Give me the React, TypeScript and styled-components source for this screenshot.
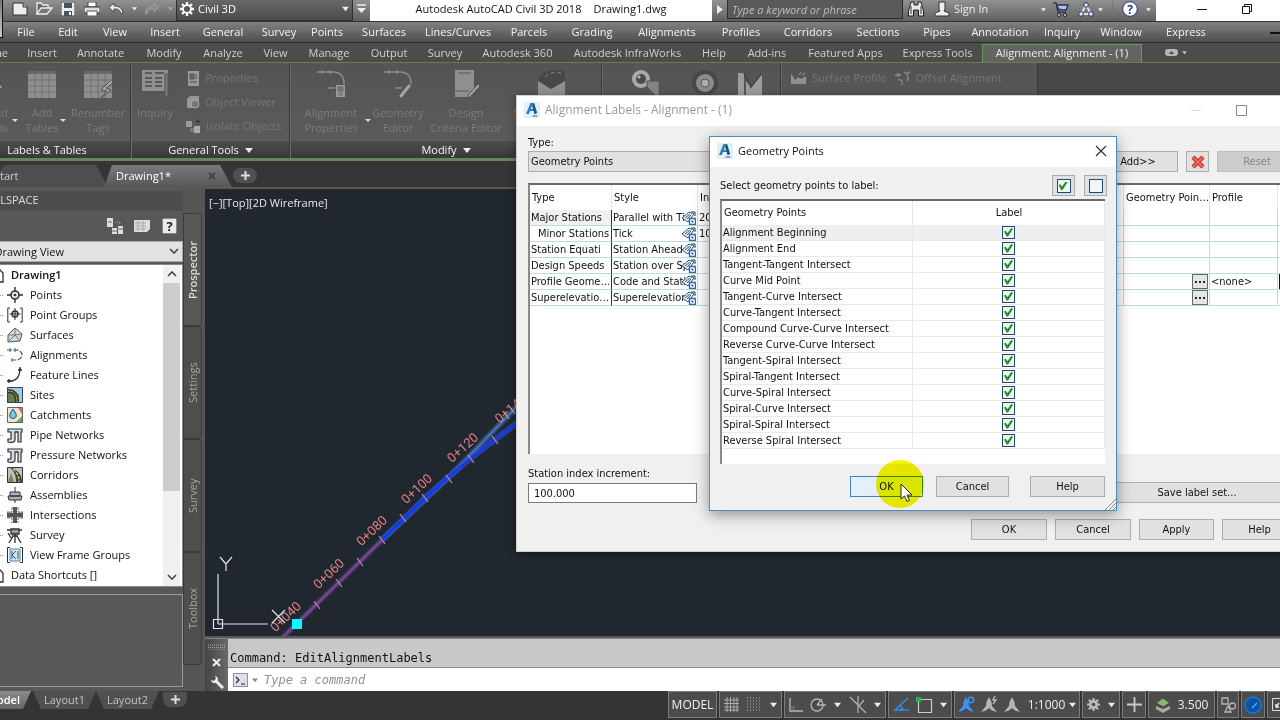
import React, { useState } from 'react';
import styled, { createGlobalStyle, css } from 'styled-components';

const ui = '"Open Sans", "Noto Sans", sans-serif';
const dialogFont = '"DejaVu Sans Condensed", "Open Sans", sans-serif';
const mono = '"DejaVu Sans Mono", "Liberation Mono", monospace';

const GlobalStyle = createGlobalStyle`
  *, *::before, *::after { box-sizing: border-box; }
  body { margin: 0; background: #333; font-family: ${ui}; font-size: 11px; line-height: 16px; color: #111; }
  button, input, select { font: inherit; color: inherit; margin: 0; padding: 0; border: 0; background: none; border-radius: 0; }
  h2 { margin: 0; font-size: 11px; font-weight: 400; }
  svg { display: block; flex: none; }
`;

const App_ = styled.div`
  position: relative;
  display: flex;
  flex-direction: column;
  min-height: 100vh;
  overflow: hidden;
`;

/* ---------- title bar ---------- */

const TitleBar = styled.header`
  display: flex;
  height: 22px;
  background: linear-gradient(#929292, #606060);
  border-bottom: 1px solid #333;
  color: #fff;
`;
const AppButton = styled.button`
  position: absolute;
  left: 0;
  top: 0;
  width: 3px;
  height: 38px;
  background: linear-gradient(#777, #ccc);
  border-right: 1px solid #111;
  border-bottom: 1px solid #111;
`;
const QuickAccess = styled.div`
  display: flex;
  align-items: center;
  padding: 0 0 4px 8px;
`;
const IconButton = styled.button<{ $w?: number }>`
  display: flex;
  align-items: center;
  justify-content: center;
  width: ${p => p.$w ?? 24}px;
  height: 18px;
`;
const Workspace = styled.button`
  display: flex;
  align-items: center;
  gap: 4px;
  width: 177px;
  padding: 0 3px 3px 3px;
  background: linear-gradient(#686868, #4c4c4c);
  border: 1px solid #2f2f2f;
  border-top: 0;
  span { flex: 1; text-align: left; }
`;
const WindowTitle = styled.div`
  flex: 1;
  display: flex;
  align-items: center;
  justify-content: center;
  gap: 12px;
  padding-bottom: 4px;
  background: #fff;
  color: #111;
  white-space: nowrap;
`;
const InfoCenter = styled.div`
  display: flex;
  align-items: center;
  padding-bottom: 3px;
  width: 444px;
`;
const Search = styled.input`
  flex: none;
  width: 176px;
  height: 20px;
  padding: 0 4px;
  background: #5a5a5a;
  border: 1px solid #2d2d2d;
  &::placeholder { color: #bdbdbd; font-style: italic; opacity: 1; }
`;
const SignIn = styled.button`
  display: flex;
  align-items: center;
  justify-content: space-between;
  width: 92px;
  color: #eee;
`;
const WindowControls = styled.div`
  display: flex;
  align-items: center;
  gap: 21px;
  width: 124px;
  padding: 0 0 4px 34px;
  background: #fff;
`;
const Rule = styled.i`
  width: 1px;
  height: 16px;
  background: #777;
`;

/* ---------- menus and ribbon ---------- */

const MenuBar = styled.nav`
  display: flex;
  height: 21px;
  padding-left: 8px;
  background: linear-gradient(#818181, #4e4e4e);
  border-bottom: 1px solid #2e2e2e;
  overflow: hidden;
`;
const MenuItem = styled.button<{ $w: number }>`
  flex: none;
  width: ${p => p.$w}px;
  padding-bottom: 1px;
  color: #f2f2f2;
  white-space: nowrap;
`;
const DocMinimise = styled.button`
  flex: none;
  margin-left: auto;
  width: 10px;
  height: 12px;
  border-bottom: 2px solid #111;
`;
const RibbonTabs = styled.nav`
  display: flex;
  height: 20px;
  background: #4c4c4c;
  border-bottom: 1px solid #5f8250;
  overflow: hidden;
`;
const RibbonTab = styled.button<{ $w: number; $active?: boolean; $cut?: boolean }>`
  flex: none;
  display: flex;
  justify-content: ${p => (p.$cut ? 'flex-end' : 'center')};
  align-items: center;
  width: ${p => p.$w}px;
  padding-right: ${p => (p.$cut ? 10 : 0)}px;
  color: #cfcfcf;
  white-space: nowrap;
  ${p => p.$active && css`
    color: #eee;
    margin-top: 1px;
    padding-bottom: 2px;
    background: #636363;
    border: 1px solid #6b9a58;
    border-bottom: 0;
  `}
`;
const RibbonToggle = styled.button`
  display: flex;
  align-items: center;
  gap: 4px;
  margin-left: 23px;
`;
const Pill = styled.i`
  display: flex;
  align-items: center;
  justify-content: center;
  width: 13px;
  height: 7px;
  border-radius: 3px;
  background: #b5b5b5;
`;
const Ribbon = styled.div`
  display: flex;
  height: 98px;
  background: #484848;
  border-bottom: 3px solid #67875a;
  overflow: hidden;
`;
const Panel = styled.section<{ $w: number }>`
  flex: none;
  display: flex;
  flex-direction: column;
  width: ${p => p.$w}px;
  background: linear-gradient(#545454, #5c5c5c);
  border-right: 1px solid #3a3a3a;
  & + & { border-left: 1px solid #60705a; }
`;
const PanelBody = styled.div`
  flex: 1;
  display: flex;
`;
const PanelTitle = styled.div<{ $shift?: number }>`
  display: flex;
  align-items: center;
  justify-content: center;
  gap: 6px;
  height: 17px;
  padding-right: ${p => p.$shift ?? 0}px;
  background: linear-gradient(#4d4d4d, #383838);
  color: #f2f2f2;
`;
const Big = styled.button<{ $w: number; $cut?: boolean }>`
  position: relative;
  flex: none;
  display: flex;
  flex-direction: column;
  align-items: ${p => (p.$cut ? 'flex-end' : 'center')};
  width: ${p => p.$w}px;
  padding-top: 6px;
  padding-right: ${p => (p.$cut ? 10 : 0)}px;
  color: #7b7b7b;
  line-height: 15px;
  white-space: nowrap;
  svg { margin-bottom: 6px; }
`;
const BigArrow = styled.i`
  position: absolute;
  right: 0;
  top: 56px;
  border: 3px solid transparent;
  border-top-color: #ddd;
`;
const SmallList = styled.div<{ $row?: boolean }>`
  display: flex;
  flex-direction: ${p => (p.$row ? 'row' : 'column')};
  gap: 8px;
  padding: 7px 0 0 8px;
  align-items: flex-start;
`;
const Small = styled.button`
  display: flex;
  align-items: center;
  gap: 5px;
  height: 16px;
  color: #777;
  white-space: nowrap;
`;

/* ---------- drawing tabs ---------- */

const FileTabs = styled.nav`
  display: flex;
  align-items: flex-end;
  height: 26px;
  background: #353535;
`;
const FileTab = styled.button<{ $w: number; $active?: boolean }>`
  display: flex;
  align-items: center;
  justify-content: space-between;
  width: ${p => p.$w}px;
  height: 22px;
  margin-right: ${p => (p.$active ? 0 : -4)}px;
  padding: 0 16px 0 ${p => (p.$active ? 12 : 0)}px;
  border-radius: 8px 12px 0 0;
  background: ${p => (p.$active ? 'linear-gradient(#7a7a7a, #575757)' : '#4e4e4e')};
  clip-path: polygon(${p => (p.$active ? '8px' : '0')} 0, calc(100% - 12px) 0, 100% 100%, 0 100%);
  color: ${p => (p.$active ? '#fff' : '#ccc')};
`;
const NewTab = styled.button<{ $flip?: boolean }>`
  display: flex;
  align-items: center;
  justify-content: center;
  width: 24px;
  height: 15px;
  margin: ${p => (p.$flip ? '1px 0 0 4px' : '0 0 4px 1px')};
  background: #505050;
  border-radius: ${p => (p.$flip ? '0 0 8px 8px' : '8px')};
`;

/* ---------- workspace body ---------- */

const Body = styled.main`
  flex: 1;
  display: flex;
  min-height: 503px;
  background: #585858;
`;
const ToolSpace = styled.aside`
  flex: none;
  display: flex;
  flex-direction: column;
  width: 223px;
  margin-left: -40px;
  padding-top: 4px;
`;
const SpaceTitle = styled.h2`
  height: 20px;
  padding-left: 17px;
  line-height: 18px;
  background: #4d4d4d;
  color: #ddd;
`;
const SpaceTools = styled.div`
  display: flex;
  justify-content: flex-end;
  align-items: center;
  gap: 11px;
  height: 30px;
  padding-right: 6px;
`;
const ViewSelectWrap = styled.div`
  position: relative;
  display: flex;
  svg { position: absolute; right: 4px; top: 7px; }
`;
const ViewSelect = styled.select`
  appearance: none;
  width: 100%;
  height: 21px;
  padding-left: 0;
  background: #e2e2e2;
  border: 1px solid #aaa;
`;
const TreeBox = styled.div`
  display: flex;
  height: 323px;
  margin-top: 2px;
  background: #fff;
  border: 1px solid #888;
`;
const Tree = styled.ul`
  flex: 1;
  list-style: none;
  margin: 0;
  padding: 0;
`;
const Node = styled.li<{ $root?: boolean; $bold?: boolean }>`
  display: flex;
  align-items: center;
  gap: 7px;
  height: 20px;
  padding-left: ${p => (p.$root ? 27 : 38)}px;
  font-weight: ${p => (p.$bold ? 600 : 400)};
  white-space: nowrap;
`;
const Dots = styled.i`
  width: 4px;
  margin-right: -3px;
  border-top: 1px dotted #999;
`;
const Scroll = styled.div`
  display: flex;
  flex-direction: column;
  justify-content: space-between;
  width: 19px;
  padding-right: 2px;
  background: linear-gradient(90deg, #f0f0f0 17px, #fff 17px);
  svg { margin: 6px auto; }
`;
const Thumb = styled.i`
  height: 208px;
  margin-bottom: auto;
  background: #cdcdcd;
`;
const Preview = styled.div`
  flex: 1;
  max-height: 93px;
  margin-top: 7px;
  border: 1px solid #999;
`;
const SideTabs = styled.nav`
  display: flex;
  flex-direction: column;
  width: 22px;
  padding: 26px 3px 0 0;
  background: #555;
`;
const SideTab = styled.button<{ $active?: boolean }>`
  flex: none;
  display: flex;
  align-items: center;
  justify-content: center;
  height: 113px;
  writing-mode: vertical-rl;
  transform: rotate(180deg);
  background: ${p => (p.$active ? '#585858' : '#4e4e4e')};
  border: 1px solid #3a3a3a;
  border-radius: 4px 0 0 4px;
  color: ${p => (p.$active ? '#ddd' : '#a5a5a5')};
  font-weight: ${p => (p.$active ? 600 : 400)};
`;
const Stage = styled.div`
  flex: 1;
  display: flex;
  flex-direction: column;
  min-width: 0;
  padding-top: 2px;
`;
const Canvas = styled.section`
  flex: 1;
  display: flex;
  align-items: flex-end;
  position: relative;
  background: #20272f;
  overflow: hidden;
`;
const ViewLabel = styled.div`
  position: absolute;
  left: 4px;
  top: 6px;
  color: #e8e8e8;
`;
const CommandLine = styled.section`
  display: flex;
  height: 53px;
  margin-top: 2px;
  border-top: 1px solid #888;
  font-family: ${mono};
`;
const CommandSide = styled.div`
  display: flex;
  flex-direction: column;
  align-items: center;
  justify-content: space-between;
  width: 23px;
  padding: 5px 0 2px;
  background: linear-gradient(90deg, #444, #6a6a6a);
`;
const CommandMain = styled.div`
  flex: 1;
  display: flex;
  flex-direction: column;
  font-size: 12px;
`;
const History = styled.div`
  height: 29px;
  padding: 11px 2px 0;
  line-height: 16px;
  background: #c8c8c8;
  border-bottom: 1px solid #888;
`;
const Prompt = styled.label`
  flex: 1;
  display: flex;
  align-items: center;
  gap: 4px;
  padding-left: 5px;
  background: #fff;
  input { flex: 1; height: 20px; padding-left: 2px; font-size: 12px; outline: 0; }
  input::placeholder { color: #909090; font-style: italic; opacity: 1; }
`;

/* ---------- bottom bar ---------- */

const Footer = styled.footer`
  display: flex;
  justify-content: space-between;
  height: 29px;
  background: #343434;
`;
const LayoutTabs = styled.nav`
  display: flex;
`;
const LayoutTab = styled.button<{ $w: number; $active?: boolean }>`
  width: ${p => p.$w}px;
  height: 18px;
  margin-right: ${p => (p.$active ? 2 : 0)}px;
  background: ${p => (p.$active ? 'linear-gradient(#8a8a8a, #666)' : '#505050')};
  clip-path: polygon(0 0, 100% 0, calc(100% - 8px) 100%, ${p => (p.$active ? '0' : '8px')} 100%);
  color: ${p => (p.$active ? '#fff' : '#c4c4c4')};
  font-weight: ${p => (p.$active ? 600 : 400)};
  display: flex;
  align-items: center;
  justify-content: ${p => (p.$active ? 'flex-end' : 'center')};
  padding-right: ${p => (p.$active ? 11 : 0)}px;
  overflow: hidden;
`;
const Status = styled.div`
  display: flex;
  gap: 2px;
  height: 27px;
  width: 612px;
  overflow: hidden;
`;
const Group = styled.div<{ $w: number }>`
  flex: none;
  display: flex;
  align-items: center;
  justify-content: space-around;
  width: ${p => p.$w}px;
  background: #4c4c4c;
  border: 1px solid #7c7c7c;
  color: #eee;
`;
const StatusButton = styled.button`
  display: flex;
  align-items: center;
  justify-content: center;
  gap: 4px;
  height: 25px;
  font-size: 12px;
`;

/* ---------- dialogs ---------- */

const Dialog = styled.section<{ $x: number; $y: number; $w: number; $front?: boolean }>`
  position: absolute;
  left: ${p => p.$x}px;
  top: ${p => p.$y}px;
  width: ${p => p.$w}px;
  background: #f0f0f0;
  border: 1px solid ${p => (p.$front ? '#4a8cbc' : '#d0d0d0')};
  box-shadow: ${p => (p.$front ? '0 4px 14px rgba(0,0,0,.4)' : '0 2px 8px rgba(0,0,0,.4)')};
`;
const DialogTitle = styled.header<{ $dim?: boolean }>`
  display: flex;
  align-items: center;
  gap: 5px;
  height: 30px;
  padding: 0 9px 2px 7px;
  background: #fff;
  color: ${p => (p.$dim ? '#999' : '#111')};
  h2 { flex: 1; font-size: ${p => (p.$dim ? 12 : 11)}px; }
`;
const BackBody = styled.div`
  padding: 9px 12px 11px 11px;
  font-family: ${dialogFont};
`;
const Line = styled.div<{ $gap?: number; $top?: number; $middle?: boolean }>`
  display: flex;
  align-items: ${p => (p.$middle ? 'center' : 'flex-end')};
  gap: ${p => p.$gap ?? 8}px;
  margin-top: ${p => p.$top ?? 0}px;
`;
const Field = styled.div<{ $w: number }>`
  display: flex;
  flex-direction: column;
  width: ${p => p.$w}px;
  label { color: #111; }
`;
const TypeSelect = styled.select`
  appearance: none;
  height: 21px;
  padding-left: 2px;
  background: #e1e1e1;
  border: 1px solid #adadad;
`;
const Increment = styled.input`
  height: 20px;
  margin-top: 1px;
  padding-left: 5px;
  background: #fff;
  border: 1px solid #7a7a7a;
`;
const Button = styled.button<{ $w: number; $push?: boolean; $apart?: boolean; $primary?: boolean }>`
  flex: none;
  display: flex;
  align-items: center;
  justify-content: center;
  width: ${p => p.$w}px;
  height: 21px;
  margin-left: ${p => (p.$push ? 'auto' : p.$apart ? '8px' : 0)};
  background: ${p => (p.$primary ? '#e3f0fb' : '#e1e1e1')};
  border: 1px solid ${p => (p.$primary ? '#3c88bd' : '#adadad')};
  &:disabled { background: #cccccc; border-color: #bfbfbf; color: #888; }
`;
const GridFrame = styled.div<{ $h: number; $top: number }>`
  height: ${p => p.$h}px;
  margin-top: ${p => p.$top}px;
  background: #fff;
  border-top: 2px solid #696969;
  border-left: 2px solid #8a8a8a;
  overflow: hidden;
`;
const Grid = styled.table<{ $tint: string; $head: number }>`
  width: 100%;
  table-layout: fixed;
  border-collapse: separate;
  border-spacing: 0;
  th, td { padding: 0 1px; text-align: left; font-weight: 400; white-space: nowrap; overflow: hidden; }
  th { height: ${p => p.$head}px; padding-left: 2px; border-right: 1px solid #e5e5e5; }
  td { height: 16px; line-height: 15px; border-right: 1px solid ${p => p.$tint}; border-bottom: 1px solid ${p => p.$tint}; }
`;
const TypeCell = styled.td<{ $indent?: boolean; $hot?: boolean }>`
  text-overflow: ${p => (p.$indent ? 'clip' : 'ellipsis')};
  background: ${p => (p.$hot ? '#f0f0f0' : '#fff')};
  && { border-right: 1px solid #333; padding-right: 0; padding-left: ${p => (p.$indent ? 8 : 1)}px; }
`;
const StyleCell = styled.div`
  display: flex;
  height: 15px;
  overflow: hidden;
  svg { margin-left: -5px; position: relative; }
`;
const StyleName = styled.span`
  flex: 1;
  min-width: 0;
  overflow: hidden;
`;
const More = styled.button`
  display: flex;
  align-items: center;
  justify-content: center;
  width: 16px;
  height: 15px;
  margin-left: auto;
  background: #e6e6e6;
  border: 1px solid #666;
`;
const Picker = styled.button`
  display: block;
  width: 16px;
  height: 15px;
  border: 1px solid #111;
`;
const FrontBody = styled.div`
  padding: 8px 11px 13px 10px;
  font-family: ${dialogFont};
`;
const SelectTools = styled.div`
  display: flex;
  gap: 9px;
  margin: 0 -2px 0 auto;
`;
const PointRow = styled.tr<{ $hot?: boolean }>`
  background: ${p => (p.$hot ? '#efefef' : '#fff')};
  td:last-child input { display: block; margin: 0 auto; }
`;
const LabelHead = styled.th`
  && { text-align: center; }
`;
const checkBox = css`
  width: 13px;
  height: 13px;
  background: #f2f6f8;
  border: 1px solid #1e4a70;
`;
const tick = css`
  content: '';
  display: block;
  width: 9px;
  height: 9px;
  margin: 1px;
  background: #1f8f1f;
  clip-path: polygon(0 40%, 20% 30%, 38% 58%, 80% 0, 100% 8%, 45% 95%, 30% 95%);
`;
const Check = styled.input.attrs({ type: 'checkbox' })`
  appearance: none;
  ${checkBox}
  &:checked::after { ${tick} }
`;
const Swatch = styled.i<{ $on?: boolean }>`
  ${checkBox}
  width: 14px;
  height: 14px;
  ${p => p.$on && css`&::after { ${tick} margin: 2px 1px; }`}
`;
const Corner = styled.div`
  position: absolute;
  right: 0;
  bottom: 0;
`;
const Pointer = styled.div`
  position: absolute;
  left: 876px;
  top: 460px;
  pointer-events: none;
`;
const Halo = styled.div`
  width: 48px;
  height: 48px;
  border-radius: 50%;
  background: #f4f400;
`;
const Blend = styled(Pointer)`
  mix-blend-mode: multiply;
`;
const Arrow = styled(Pointer)`
  left: 900px;
  top: 483px;
`;

/* ---------- icons ---------- */

const Caret = ({ c = '#eee', s = 7 }: { c?: string; s?: number }) => (
  <svg width={s} height={s} viewBox="0 0 8 8"><path d="M0 2h8L4 7z" fill={c} /></svg>
);
const Chevron = ({ up }: { up?: boolean }) => (
  <svg width="10" height="6" viewBox="0 0 10 6"><path d={up ? 'M1 5l4-4 4 4' : 'M1 1l4 4 4-4'} fill="none" stroke="#444" strokeWidth="1.6" /></svg>
);
const Plus = ({ s = 9 }: { s?: number }) => (
  <svg width={s} height={s} viewBox="0 0 9 9"><path d="M4.500 0v9M0 4.500h9" stroke="#ddd" strokeWidth="2" /></svg>
);
const Logo = () => (
  <svg width="16" height="16" viewBox="0 0 16 16">
    <rect width="16" height="16" fill="#e3eff8" />
    <path d="M6.500 1h3.500l3 10-2.500 1-.8-3H6l-1.200 3H2z" fill="#2f7fb4" />
    <path d="M8 3.500L9 7H6.800z" fill="#e3eff8" />
    <path d="M10 1l3 10-2.500 1-2-8z" fill="#1c5680" />
    <path d="M8.500 14h5" stroke="#5b9bc8" strokeWidth="1.500" />
  </svg>
);

const quick: React.ReactNode[] = [
  <svg width="16" height="14" viewBox="0 0 16 14"><path d="M1 1h10l4 4v8H1z" fill="#eee" stroke="#333" /><path d="M11 1v4h4" fill="#bbb" stroke="#333" /></svg>,
  <svg width="18" height="14" viewBox="0 0 18 14"><path d="M2 12V1h4l2 2h5v3" fill="#666" stroke="#eee" strokeWidth="1.300" /><path d="M2 12l4-6h11l-5 6z" fill="#777" stroke="#eee" strokeWidth="1.300" /></svg>,
  <svg width="14" height="14" viewBox="0 0 14 14"><rect width="14" height="14" fill="#eee" stroke="#333" /><path d="M3 1h8v5H3z" fill="#47535f" /><path d="M3 9h8v5H3z" fill="#47535f" /><path d="M8 10h2v3H8z" fill="#fff" /></svg>,
  <svg width="16" height="14" viewBox="0 0 16 14"><path d="M4 0h8v5H4z" fill="#fff" stroke="#444" /><path d="M0 5h16v6H0z" fill="#ddd" stroke="#333" /><path d="M3 9h10v5H3z" fill="#fff" stroke="#555" /></svg>,
  <svg width="16" height="14" viewBox="0 0 16 14"><path d="M6 1L1 5.500 6 10V7c4-.5 6 1 7 5h1.500C15 7 12 4 6 4z" fill="#eee" stroke="#333" strokeWidth=".8" /></svg>,
];
const Redo = () => (
  <svg width="16" height="14" viewBox="0 0 16 14"><path d="M10 1l5 4.500-5 4.500V7C6 6.500 4 8 3 12H1.500C1 7 4 4 10 4z" fill="#8c8c8c" stroke="#a5a5a5" strokeWidth=".8" /></svg>
);
const Gear = ({ s = 14, c = '#fff', h = '#555' }: { s?: number; c?: string; h?: string }) => (
  <svg width={s} height={s} viewBox="0 0 16 16">
    <circle cx="8" cy="8" r="5.500" fill={c} />
    <path d="M8 0v16M0 8h16M2.300 2.300l11.400 11.400M13.700 2.300L2.300 13.700" stroke={c} strokeWidth="2.600" />
    <circle cx="8" cy="8" r={c === '#fff' ? 3.5 : 2.2} fill={h} />
  </svg>
);

const rb = '#8f8f8f';
const TableIcon = ({ bolt }: { bolt?: boolean }) => (
  <svg width="30" height="30" viewBox="0 0 30 30">
    <path d="M1 2h28v27H1z" fill={rb} /><path d="M1 2h28v3H1z" fill="#686868" />
    <path d="M1 11h28M1 17h28M1 23h28M8 5v24M15 5v24M22 5v24" stroke="#717171" />
    {bolt && <path d="M27 12l-9 9 6 1-7 8 11-9-5-2 7-5" fill="#a5a5a5" stroke="#555" />}
  </svg>
);
const ribbonIcon: Record<string, React.ReactNode> = {
  label: <svg width="30" height="30" viewBox="0 0 30 30"><path d="M14 9l10 9-10 9-10-9z" fill="#a2a2a2" /></svg>,
  table: <TableIcon />,
  renumber: <TableIcon bolt />,
  inquiry: <svg width="30" height="30" viewBox="0 0 30 30"><path d="M2 1h26v21H2z" fill={rb} /><path d="M5 4h7M15 4h9M5 9h7M15 9h7M5 13h7M15 13h7M5 17h7M15 17h7" stroke="#5a5a5a" strokeWidth="2" /><path d="M25 5h3v22l-3 2z" fill="#7a7a7a" stroke="#555" /></svg>,
  align: <svg width="30" height="30" viewBox="0 0 30 30"><path d="M1 3h16c7 0 11 4 11 12M12 19h7M6 1v4M14 1v4" fill="none" stroke="#8a8a8a" strokeWidth="1.500" /><path d="M20 16h9v12h-9z" fill="#9a9a9a" /><path d="M22 18h5v4h-5zM22 24h5M22 26h5" fill="#777" stroke="#666" /></svg>,
  geom: <svg width="30" height="30" viewBox="0 0 30 30"><path d="M1 3h16c7 0 11 4 11 12M12 19h7M6 1v4M14 1v4" fill="none" stroke="#8a8a8a" strokeWidth="1.500" /><path d="M26 17l-8 10" stroke="#a5a5a5" strokeWidth="3" strokeLinecap="round" /></svg>,
  design: <svg width="30" height="30" viewBox="0 0 30 30"><path d="M4 1h19v22l-3 5H4z" fill={rb} /><path d="M7 4h13M4 22h14" stroke="#737373" strokeWidth="2" /><path d="M27 15l-9 10-2 4 4-2 9-10z" fill="#a5a5a5" stroke="#555" /></svg>,
  super: <svg width="30" height="30" viewBox="0 0 30 30"><path d="M2 8C8 0 20-1 28 3v10l-14 9L2 13z" fill="#484848" /><path d="M8 8c5-5 10-5 16-4" stroke="#888" strokeDasharray="4 3" fill="none" /><path d="M1 12l13 8v10L1 26zM14 20l14-8v14l-14 4z" fill={rb} /></svg>,
  eye: <svg width="30" height="30" viewBox="0 0 30 30"><circle cx="10" cy="10" r="9" fill="#aaa" /><circle cx="10" cy="10" r="5" fill="#4b4b4b" /><circle cx="8" cy="8" r="1.500" fill="#bbb" /><path d="M16 12h12v18l-12-12z" fill="#858585" stroke="#555" /></svg>,
  wheel: <svg width="26" height="30" viewBox="0 0 26 30"><circle cx="13" cy="14" r="13" fill="#484848" /><circle cx="13" cy="14" r="9" fill="#8c8c8c" /><circle cx="13" cy="14" r="4" fill="#b0b0b0" stroke="#555" /></svg>,
  profile: <svg width="28" height="30" viewBox="0 0 28 30"><path d="M2 4h6v26H2zM26 4v26H10V12l5 6z" fill="#9c9c9c" /><path d="M8 4l7 14L26 4" stroke="#444" strokeWidth="1.500" fill="none" /></svg>,
};
const smallIcon: React.ReactNode[] = [
  <svg width="14" height="15" viewBox="0 0 14 15"><path d="M2 0h11v15H2z" fill="#999" /><path d="M4 3h4v5H4zM10 3v5M4 11h7" fill="#666" stroke="#555" /></svg>,
  <svg width="14" height="15" viewBox="0 0 14 15"><path d="M1 4l3-3h9v10l-3 2H1z" fill="#989898" /><circle cx="9" cy="9" r="4" fill="#777" stroke="#aaa" /></svg>,
  <svg width="15" height="15" viewBox="0 0 15 15"><path d="M0 2h6v6H0z" fill="#999" /><path d="M8 7h6v7H8z" fill="#aaa" /><path d="M4 9h4v4H4z" fill="#777" /><path d="M12 0v5M10 2.500h4" stroke="#333" /></svg>,
];
const SurfaceIcon = () => <svg width="17" height="14" viewBox="0 0 17 14"><path d="M1 2v11h15V5l-5 3-3-2-3 3z" fill="#909090" /><path d="M9 4l2-3M12 4l3-2" stroke="#999" /></svg>;
const OffsetIcon = () => <svg width="16" height="15" viewBox="0 0 16 15"><path d="M0 4h6M3 2v4M9 1c4 2 5 6 3 9M3 9c3-1 5 1 4 5M11 3l4-2" fill="none" stroke="#888" strokeWidth="1.400" /></svg>;

const k = '#2b3138';
const treeIcon: Record<string, React.ReactNode> = {
  Points: <><circle cx="8" cy="8" r="4" fill="#dfe6ee" stroke={k} strokeWidth="1.600" /><circle cx="8" cy="8" r="1.300" fill={k} /><path d="M8 0v4M8 12v4M0 8h4M12 8h4" stroke={k} strokeWidth="1.400" /></>,
  'Point Groups': <><path d="M3 1H.8v14H3M13 1h2.200v14H13" fill="none" stroke={k} /><circle cx="8" cy="7" r="3" fill="#dfe6ee" stroke={k} strokeWidth="1.400" /><path d="M8 1v12M2.500 7h11" stroke={k} /></>,
  Surfaces: <><path d="M8 1l7 6-2 7-12 1V8z" fill="#d3d8dd" stroke="#555" /><path d="M8 1v7l-7 7M8 8l7-1M8 8l5 6M1 8l7 0" stroke="#777" fill="none" /></>,
  Alignments: <><path d="M0 3h9c8 0 8 10 0 10H5" fill="none" stroke="#3c5a7a" strokeWidth="1.200" strokeDasharray="5 1.500" /><path d="M3 1v4M8 1v4M5 11v4" stroke="#3c5a7a" /></>,
  'Feature Lines': <><path d="M1 14c8 1 12-4 12-13" fill="none" stroke={k} strokeWidth="1.300" /><path d="M0 14h4M2 12v4M11 3h4M13 0v4" stroke={k} strokeWidth="1.300" /></>,
  Sites: <><path d="M0 0h16v16H0z" fill="#9ecbe8" /><path d="M0 3h6l6 5v8H0z" fill="#6c7a52" /><path d="M1 4c7 0 9 4 9 11" stroke="#333" strokeWidth="4" fill="none" /><path d="M1 4c7 0 9 4 9 11" stroke="#f0d040" fill="none" strokeDasharray="2 1" /><path d="M.5.5h15v15H.5z" fill="none" stroke="#345" /></>,
  Catchments: <><path d="M.5.5h15v15H.5z" fill="#f3e3c8" stroke="#567" /><path d="M11 1h4v6z" fill="#e07040" /><path d="M9 15l6-6v6z" fill="#6aa860" /><path d="M6 2c2 3 4 5 3 8-1 2-5 2-6 0-1-3 1-5 3-8z" fill="#7ec0ec" stroke="#256" /></>,
  Pipes: <><path d="M1 2h14v3h-1v10h-3V5H8v8c0 2-3 3-7 2v-3h3V5H1z" fill="#d9dde1" stroke={k} strokeWidth="1.200" /><path d="M8 5h3" stroke={k} /></>,
  Corridors: <><path d="M.5.5h15v15H.5z" fill="#b9c3c9" stroke="#333" /><path d="M4 1c3 5 5 6 5 14h6C15 8 11 4 6 1z" fill="#3e4449" /><path d="M6 2c4 4 6 7 6 13" stroke="#e9c832" fill="none" strokeWidth="1.400" strokeDasharray="3 1.500" /><path d="M1 15l3-9 3 9z" fill="#7b8b4a" /></>,
  Assemblies: <><path d="M8 0v16" stroke={k} /><path d="M3 5h10v4H3zM1 9h14l-1 4H2z" fill="#aab3ba" stroke={k} /></>,
  Intersections: <><path d="M5 0v5H0v6h5v5M11 0v5h5v6h-5v5" fill="#aab3ba" stroke="#667" strokeDasharray="3 1" /><path d="M6 0h4v6h6v4h-6v6H6v-6H0V6h6z" fill="#50575d" /></>,
  Survey: <><path d="M4 2h8v5H4zM0 3h4M12 3h3M8 7v2M5 9h6M6 9l-4 7M8 9v7M10 9l4 7M1 6l3 5" fill="#999" stroke={k} strokeWidth="1.300" /></>,
  Frames: <><path d="M3 .5H.5v15H3M13 .5h2.500v15H13" fill="none" stroke={k} /><path d="M3 2h10v12H3z" fill="#cfe3f3" stroke="#4b87b5" /><path d="M5 4v8M5 8l4-4M5 8l4 4M11 4v8" stroke="#456" fill="none" /></>,
};
const tree: [string, string][] = [
  ['Points', 'Points'], ['Point Groups', 'Point Groups'], ['Surfaces', 'Surfaces'], ['Alignments', 'Alignments'],
  ['Feature Lines', 'Feature Lines'], ['Sites', 'Sites'], ['Catchments', 'Catchments'], ['Pipe Networks', 'Pipes'],
  ['Pressure Networks', 'Pipes'], ['Corridors', 'Corridors'], ['Assemblies', 'Assemblies'], ['Intersections', 'Intersections'],
  ['Survey', 'Survey'], ['View Frame Groups', 'Frames'],
];
const DocIcon = () => (
  <svg width="16" height="16" viewBox="0 0 16 16"><path d="M4 2h7l4 4v9H4z" fill="#fff" stroke={k} strokeWidth="1.300" /></svg>
);
const StyleIcon = () => (
  <svg width="15" height="15" viewBox="0 0 15 15">
    <path d="M1 8l7-6 5 2-6 8z" fill="#e8eef4" stroke="#345a7a" /><path d="M4 8l5-4M6 9l4-4" stroke="#345a7a" />
    <path d="M10 2l4 0v4" fill="none" stroke="#333" /><path d="M8.500 8.500h6v6h-6z" fill="#fff" stroke="#2a6db0" strokeWidth="1.400" /><path d="M10.500 10.500h2v2h-2z" fill="#2a6db0" />
  </svg>
);
const Person = ({ c, mark }: { c: string; mark?: 'ring' | 'bolt' }) => (
  <svg width="18" height="18" viewBox="0 0 18 18">
    <path d="M8 1l2.500 5 .5 4 5 6-5-1.500-3-2.500-3 2.500L0 16l5-6 .5-4z" fill={c} />
    {mark === 'ring' && <circle cx="13" cy="4" r="2.700" fill="none" stroke={c} strokeWidth="1.500" />}
    {mark === 'bolt' && <path d="M14 0l-2 4h3l-3 4" fill="none" stroke={c} strokeWidth="1.500" />}
  </svg>
);

/* ---------- data ---------- */

const menus: [string, number][] = [
  ['File', 36], ['Edit', 48], ['View', 46], ['Insert', 54], ['General', 62], ['Survey', 50], ['Points', 46], ['Surfaces', 68],
  ['Lines/Curves', 80], ['Parcels', 62], ['Grading', 64], ['Alignments', 86], ['Profiles', 62], ['Corridors', 72],
  ['Sections', 68], ['Pipes', 50], ['Annotation', 76], ['Inquiry', 48], ['Window', 70], ['Express', 60],
];
const tabs: [string, number][] = [
  ['Insert', 48], ['Annotate', 69], ['Modify', 58], ['Analyze', 60], ['View', 45], ['Manage', 62], ['Output', 58], ['Survey', 54],
  ['Autodesk 360', 91], ['Autodesk InfraWorks', 129], ['Help', 44], ['Add-ins', 62], ['Featured Apps', 95], ['Express Tools', 89],
];
const points = [
  'Alignment Beginning', 'Alignment End', 'Tangent-Tangent Intersect', 'Curve Mid Point', 'Tangent-Curve Intersect',
  'Curve-Tangent Intersect', 'Compound Curve-Curve Intersect', 'Reverse Curve-Curve Intersect', 'Tangent-Spiral Intersect',
  'Spiral-Tangent Intersect', 'Curve-Spiral Intersect', 'Spiral-Curve Intersect', 'Spiral-Spiral Intersect', 'Reverse Spiral Intersect',
];
const labelRows: [string, string, string][] = [
  ['Major Stations', 'Parallel with Tick', '20'], ['Minor Stations', 'Tick', '10'], ['Station Equati', 'Station Ahead &', ''],
  ['Design Speeds', 'Station over Speed', ''], ['Profile Geometry', 'Code and Station', ''], ['Superelevation Cr', 'Superelevation C', ''],
];
const stations: [string, number, number, number][] = [
  ['0+040', 286, 617, -44], ['0+060', 329, 574, -44], ['0+080', 372, 531, -44], ['0+100', 417, 489, -43], ['0+120', 463, 448, -42], ['0+140', 511, 409, -40],
];
const ticks = [[317, 605], [339, 583], [360, 562], [382, 540], [403, 518], [425, 498], [449, 479], [471, 459], [495, 440], [506, 415], [512, 410]];

const Drawing = () => (
  <svg width="400" height="447" viewBox="205 189 400 447">
    <path d="M282 638L382 540" stroke="#2a3f86" strokeWidth="6" opacity=".6" />
    <path d="M282 638L382 540" stroke="#81417d" strokeWidth="3" />
    <path d="M382 540L448 478L530 393" stroke="#2f5fae" strokeWidth="6" opacity=".6" fill="none" />
    <path d="M448 478L530 393" stroke="#5372ac" strokeWidth="2" />
    <path d="M382 540L425 498Q470 456 530 414" stroke="#2b55c8" strokeWidth="6" opacity=".6" fill="none" />
    <path d="M382 540L425 498Q470 456 530 414" stroke="#1238f0" strokeWidth="2.500" fill="none" />
    {ticks.map(([x, y]) => <path key={x} d={`M${x - 3} ${y - 4}l6 8`} stroke="#c98aa0" strokeWidth="1.200" />)}
    {stations.map(([t, x, y, r]) => (
      <text key={t} x={x} y={y + 4} transform={`rotate(${r} ${x} ${y})`} textAnchor="middle" fontFamily="Roboto, sans-serif" fontSize="13" fill="#e27f85">{t}</text>
    ))}
    <path d="M213.500 619.500h9v9h-9zM218 624V574M218 624h50M272 610l13 13M285 610l-13 13M220 557l6 7 6-7M226 564v7" fill="none" stroke="#dde3e8" strokeWidth="1.200" />
    <path d="M292 619h10v10h-10z" fill="#00ffff" />
  </svg>
);

const Toolbars = () => (
  <>
    <TitleBar>
      <QuickAccess>
        {quick.map((icon, i) => <IconButton key={i}>{icon}</IconButton>)}
        <IconButton $w={12}><Caret s={5} /></IconButton>
        <IconButton><Redo /></IconButton>
        <IconButton $w={12}><Caret s={5} c="#aaa" /></IconButton>
      </QuickAccess>
      <Workspace><Gear /><span>Civil 3D</span><Caret /></Workspace>
      <IconButton $w={17}><svg width="9" height="10" viewBox="0 0 9 10"><path d="M0 1h9" stroke="#eee" strokeWidth="1.500" /><path d="M0 4h9L4.500 9z" fill="#eee" /></svg></IconButton>
      <WindowTitle><span>Autodesk AutoCAD Civil 3D 2018</span><span>Drawing1.dwg</span></WindowTitle>
      <InfoCenter>
        <IconButton $w={15}><svg width="6" height="9" viewBox="0 0 6 9"><path d="M0 0v9l6-4.500z" fill="#eee" /></svg></IconButton>
        <Search aria-label="Search" placeholder="Type a keyword or phrase" />
        <IconButton $w={26}><svg width="16" height="16" viewBox="0 0 16 16"><path d="M3 1h3v3h4V1h3l2.500 9v5h-5V9h-5v6h-5v-5z" fill="#e8e8e8" stroke="#222" /><path d="M3 5v8M13 5v8" stroke="#333" /></svg></IconButton>
        <IconButton $w={25}><svg width="16" height="16" viewBox="0 0 16 16"><path d="M5 1h6v7l-1 2 5 2v3H1v-3l5-2-1-2z" fill="#eee" stroke="#333" /></svg></IconButton>
        <SignIn><span>Sign In</span><Caret s={5} /></SignIn>
        <IconButton $w={30}><svg width="16" height="15" viewBox="0 0 16 15"><path d="M0 1h3l2 9h8M4 3h11l-2 5H5z" fill="#b9c3dd" stroke="#24305a" strokeWidth="1.300" /><circle cx="6" cy="13" r="1.500" fill="#eee" stroke="#222" /><circle cx="12" cy="13" r="1.500" fill="#eee" stroke="#222" /></svg></IconButton>
        <IconButton $w={20}><svg width="16" height="15" viewBox="0 0 16 15"><path d="M8 3L3 12h10z" fill="none" stroke="#dce2f0" strokeWidth="2" /><g fill="#dfe5f4" stroke="#24305a"><circle cx="8" cy="3" r="2.300" /><circle cx="3" cy="12" r="2.300" /><circle cx="13" cy="12" r="2.300" /></g></svg></IconButton>
        <IconButton $w={9}><Caret s={5} /></IconButton>
        <IconButton $w={14}><Rule /></IconButton>
        <IconButton $w={22}><svg width="16" height="16" viewBox="0 0 16 16"><circle cx="8" cy="8" r="7.300" fill="#fff" stroke="#1d3c78" /><text x="8" y="12.500" textAnchor="middle" fontSize="12" fontWeight="700" fill="#1d3c98">?</text></svg></IconButton>
        <IconButton $w={14}><Caret s={5} /></IconButton>
      </InfoCenter>
      <WindowControls>
        <IconButton aria-label="Minimize"><svg width="10" height="10" viewBox="0 0 10 10"><path d="M0 5.500h10" stroke="#111" /></svg></IconButton>
        <IconButton aria-label="Restore"><svg width="10" height="10" viewBox="0 0 10 10"><path d="M.5 2.500h7v7h-7zM2.500 2.500v-2h7v7h-2" fill="none" stroke="#111" /></svg></IconButton>
      </WindowControls>
    </TitleBar>
    <MenuBar>
      {menus.map(([t, w]) => <MenuItem key={t} $w={w}>{t}</MenuItem>)}
      <DocMinimise aria-label="Minimize drawing" />
    </MenuBar>
    <RibbonTabs>
      <RibbonTab $w={18} $cut>Home</RibbonTab>
      {tabs.map(([t, w]) => <RibbonTab key={t} $w={w}>{t}</RibbonTab>)}
      <RibbonTab $w={160} $active>Alignment: Alignment - (1)</RibbonTab>
      <RibbonToggle aria-label="Minimize ribbon"><Pill><svg width="5" height="3" viewBox="0 0 5 3"><path d="M0 3h5L2.500 0z" fill="#444" /></svg></Pill><Caret s={5} c="#bbb" /></RibbonToggle>
    </RibbonTabs>
    <Ribbon>
      <Panel $w={131}>
        <PanelBody>
          <Big $w={18} $cut>{ribbonIcon.label}<span>Add</span><span>Labels</span><BigArrow /></Big>
          <Big $w={48}>{ribbonIcon.table}<span>Add</span><span>Tables</span><BigArrow /></Big>
          <Big $w={64}>{ribbonIcon.renumber}<span>Renumber</span><span>Tags</span></Big>
        </PanelBody>
        <PanelTitle $shift={36}>Labels &amp; Tables</PanelTitle>
      </Panel>
      <Panel $w={159}>
        <PanelBody>
          <Big $w={46}>{ribbonIcon.inquiry}<span>Inquiry</span></Big>
          <SmallList>
            {['Properties', 'Object Viewer', 'Isolate Objects'].map((t, i) => <Small key={t}>{smallIcon[i]}<span>{t}</span></Small>)}
          </SmallList>
        </PanelBody>
        <PanelTitle>General Tools <Caret s={8} /></PanelTitle>
      </Panel>
      <Panel $w={312}>
        <PanelBody>
          <Big $w={80}>{ribbonIcon.align}<span>Alignment</span><span>Properties</span><BigArrow /></Big>
          <Big $w={54}>{ribbonIcon.geom}<span>Geometry</span><span>Editor</span></Big>
          <Big $w={82}>{ribbonIcon.design}<span>Design</span><span>Criteria Editor</span></Big>
          <Big $w={90}>{ribbonIcon.super}<span>Superelevation</span></Big>
        </PanelBody>
        <PanelTitle>Modify <Caret s={8} /></PanelTitle>
      </Panel>
      <Panel $w={179}>
        <PanelBody>
          <Big $w={86}>{ribbonIcon.eye}</Big>
          <Big $w={32}>{ribbonIcon.wheel}</Big>
          <Big $w={58}>{ribbonIcon.profile}</Big>
        </PanelBody>
        <PanelTitle />
      </Panel>
      <Panel $w={257}>
        <PanelBody>
          <SmallList $row>
            <Small><SurfaceIcon /><span>Surface Profile</span></Small>
            <Small><OffsetIcon /><span>Offset Alignment</span></Small>
          </SmallList>
        </PanelBody>
        <PanelTitle />
      </Panel>
    </Ribbon>
    <FileTabs>
      <FileTab $w={108}>tart</FileTab>
      <FileTab $w={128} $active><span>Drawing1*</span><svg width="8" height="8" viewBox="0 0 8 8"><path d="M1 1l6 6M7 1L1 7" stroke="#444" strokeWidth="2" /></svg></FileTab>
      <NewTab aria-label="New drawing"><Plus /></NewTab>
    </FileTabs>
  </>
);

const Space = () => (
  <>
    <ToolSpace>
      <SpaceTitle>TOOLSPACE</SpaceTitle>
      <SpaceTools>
        <IconButton $w={16}><svg width="16" height="16" viewBox="0 0 16 16"><path d="M0 0h6v9H0zM5 10h5v6H5zM11 8h5v8h-5z" fill="#ddd" /><path d="M1 4h4M11 11h5M5 13h5" stroke="#666" /><path d="M8 4h5v3" fill="none" stroke="#aaa" strokeDasharray="1 1" /></svg></IconButton>
        <IconButton $w={16}><svg width="16" height="14" viewBox="0 0 16 14"><path d="M0 1h16v9l-3 3H0z" fill="#ddd" /><path d="M1 4h11M1 7h11M1 10h11M4 2v10M9 2v10" stroke="#aaa" /></svg></IconButton>
        <IconButton $w={16}><svg width="15" height="16" viewBox="0 0 15 16"><path d="M0 0h15v16H0z" fill="#e8ebee" stroke="#222" /><text x="7.500" y="12.500" textAnchor="middle" fontSize="13" fontWeight="700" fill="#222">?</text></svg></IconButton>
      </SpaceTools>
      <ViewSelectWrap>
        <ViewSelect aria-label="Tree view"><option>Active Drawing View</option></ViewSelect>
        <Chevron />
      </ViewSelectWrap>
      <TreeBox>
        <Tree>
          <Node $root $bold><DocIcon />Drawing1</Node>
          {tree.map(([t, icon]) => <Node key={t}><Dots /><svg width="16" height="16" viewBox="0 0 16 16">{treeIcon[icon]}</svg>{t}</Node>)}
          <Node $root><DocIcon />Data Shortcuts []</Node>
        </Tree>
        <Scroll><Chevron up /><Thumb /><Chevron /></Scroll>
      </TreeBox>
      <Preview />
    </ToolSpace>
    <SideTabs>
      <SideTab $active>Prospector</SideTab>
      <SideTab>Settings</SideTab>
      <SideTab>Survey</SideTab>
      <SideTab>Toolbox</SideTab>
    </SideTabs>
  </>
);

const LabelsDialog = () => (
  <Dialog $x={516} $y={95} $w={794}>
    <DialogTitle $dim>
      <Logo /><h2>Alignment Labels - Alignment - (1)</h2>
      <IconButton $w={40} aria-label="Minimize"><svg width="10" height="10" viewBox="0 0 10 10"><path d="M0 5.500h10" stroke="#ddd" /></svg></IconButton>
      <IconButton $w={40} aria-label="Maximize"><svg width="11" height="11" viewBox="0 0 11 11"><path d="M.5.5h10v10H.5z" fill="none" stroke="#888" /></svg></IconButton>
      <IconButton $w={34} aria-label="Close" />
    </DialogTitle>
    <BackBody>
      <Line>
        <Field $w={400}><label htmlFor="type">Type:</label><TypeSelect id="type"><option>Geometry Points</option></TypeSelect></Field>
        <Button $w={80} $push>Add&gt;&gt;</Button>
        <Button $w={23} aria-label="Delete"><svg width="14" height="14" viewBox="0 0 14 14"><path d="M2 2l10 10M12 2L2 12" stroke="#b52a2a" strokeWidth="4.500" /><path d="M2 2l10 10M12 2L2 12" stroke="#f0605a" strokeWidth="2.500" /></svg></Button>
        <Button $w={80} disabled>Reset</Button>
      </Line>
      <GridFrame $h={271} $top={11}>
        <Grid $tint="#b9dfd4" $head={25}>
          <colgroup><col width="82" /><col width="86" /><col width="86" /><col width="170" /><col width="170" /><col width="86" /><col width="68" /><col /></colgroup>
          <thead><tr><th>Type</th><th>Style</th><th>Increment</th><th /><th /><th>Geometry Poin…</th><th>Profile</th><th /></tr></thead>
          <tbody>
            {labelRows.map(([t, s, n], i) => (
              <tr key={t}>
                <TypeCell $hot={i === 0} $indent={i === 1}>{t}</TypeCell>
                <td><StyleCell><StyleName>{s}</StyleName><StyleIcon /></StyleCell></td>
                <td>{n}</td><td /><td />
                <td>{i > 3 && <More aria-label="Choose points"><svg width="10" height="2" viewBox="0 0 10 2"><path d="M0 0h2v2H0zM4 0h2v2H4zM8 0h2v2H8z" fill="#223" /></svg></More>}</td>
                <td>{i === 4 && '<none>'}</td>
                <td>{i === 4 && <Picker aria-label="Choose profile" />}</td>
              </tr>
            ))}
          </tbody>
        </Grid>
      </GridFrame>
      <Line $top={12}>
        <Field $w={169}><label htmlFor="inc">Station index increment:</label><Increment id="inc" defaultValue="100.000" /></Field>
        <Button $w={200} $push>Save label set...</Button>
      </Line>
      <Line $top={16}>
        <Button $w={76} $push>OK</Button>
        <Button $w={76}>Cancel</Button>
        <Button $w={75}>Apply</Button>
        <Button $w={75}>Help</Button>
      </Line>
    </BackBody>
  </Dialog>
);

const PointsDialog = () => {
  const [on, setOn] = useState(points.map(() => true));
  return (
    <Dialog $x={709} $y={136} $w={408} $front>
      <DialogTitle>
        <Logo /><h2>Geometry Points</h2>
        <IconButton $w={12} aria-label="Close"><svg width="12" height="12" viewBox="0 0 12 12"><path d="M1 1l10 10M11 1L1 11" stroke="#333" strokeWidth="1.200" /></svg></IconButton>
      </DialogTitle>
      <FrontBody>
        <Line $middle>
          <span>Select geometry points to label:</span>
          <SelectTools>
            <Button $w={23} aria-label="Select all" onClick={() => setOn(points.map(() => true))}><Swatch $on /></Button>
            <Button $w={23} aria-label="Clear all" onClick={() => setOn(points.map(() => false))}><Swatch /></Button>
          </SelectTools>
        </Line>
        <GridFrame $h={265} $top={3}>
          <Grid $tint="#e9e9e9" $head={24}>
            <colgroup><col width="191" /><col /></colgroup>
            <thead><tr><th>Geometry Points</th><LabelHead>Label</LabelHead></tr></thead>
            <tbody>
              {points.map((t, i) => (
                <PointRow key={t} $hot={i === 0}>
                  <td><label htmlFor={`p${i}`}>{t}</label></td>
                  <td><Check id={`p${i}`} checked={on[i]} onChange={() => setOn(on.map((v, j) => (j === i ? !v : v)))} /></td>
                </PointRow>
              ))}
            </tbody>
          </Grid>
        </GridFrame>
        <Line $gap={13} $top={12}>
          <Button $w={73} $push $primary>OK</Button>
          <Button $w={73}>Cancel</Button>
          <Button $w={75} $apart>Help</Button>
        </Line>
      </FrontBody>
      <Corner><svg width="12" height="12" viewBox="0 0 12 12"><path d="M1 12L12 1M5 12l7-7M9 12l3-3" stroke="#888" /></svg></Corner>
    </Dialog>
  );
};

const StatusBar = () => {
  const g = '#b5b5b5';
  return (
    <Status>
      <Group $w={49}><StatusButton>MODEL</StatusButton></Group>
      <Group $w={63}>
        <StatusButton aria-label="Grid"><svg width="15" height="15" viewBox="0 0 15 15"><path d="M3 0v15M6.500 0v15M10 0v15M13 0v15M0 3h15M0 6.500h15M0 10h15M0 13h15" stroke={g} strokeWidth=".9" /></svg></StatusButton>
        <StatusButton aria-label="Snap"><svg width="15" height="15" viewBox="0 0 15 15"><path d="M0 1h15M0 4h15M0 7h15M0 10h15M0 13h15" stroke={g} strokeWidth="1.200" strokeDasharray="1 2" /></svg></StatusButton>
        <StatusButton aria-label="Snap options"><Caret /></StatusButton>
      </Group>
      <Group $w={102}>
        <StatusButton aria-label="Ortho"><svg width="14" height="14" viewBox="0 0 14 14"><path d="M1 0v13h13" fill="none" stroke={g} strokeWidth="1.400" /><path d="M1 9h4v4" fill="none" stroke="#888" /></svg></StatusButton>
        <StatusButton aria-label="Polar"><svg width="16" height="14" viewBox="0 0 16 14"><circle cx="7" cy="7" r="6" fill="none" stroke={g} strokeWidth="1.300" /><path d="M7 7h9M7 7l5-6" stroke={g} strokeWidth="1.300" /></svg></StatusButton>
        <StatusButton aria-label="Polar options"><Caret /></StatusButton>
        <StatusButton aria-label="Isodraft"><svg width="18" height="18" viewBox="0 0 18 18"><path d="M1 1l16 16M9 0v17M10 10l5-6" stroke={g} strokeWidth="1.200" /></svg></StatusButton>
        <StatusButton aria-label="Isodraft options"><Caret /></StatusButton>
      </Group>
      <Group $w={64}>
        <StatusButton aria-label="Tracking"><svg width="16" height="15" viewBox="0 0 16 15"><path d="M15 1L2 13h14M7 8l3 5" fill="none" stroke="#2f8cf0" strokeWidth="1.600" /></svg></StatusButton>
        <StatusButton aria-label="Object snap"><svg width="17" height="16" viewBox="0 0 17 16"><path d="M2.500 2.500h13v13h-13z" fill="none" stroke="#ccc" strokeWidth="1.200" /><path d="M0 0h5v5H0z" fill="#2ab04a" /></svg></StatusButton>
        <StatusButton aria-label="Snap list"><Caret /></StatusButton>
      </Group>
      <Group $w={126}>
        <StatusButton aria-label="Annotation visibility"><Person c="#3b93f5" mark="ring" /></StatusButton>
        <StatusButton aria-label="Auto scale"><Person c={g} mark="bolt" /></StatusButton>
        <StatusButton aria-label="Annotation scale"><Person c={g} /></StatusButton>
        <StatusButton>1:1000 <Caret /></StatusButton>
      </Group>
      <Group $w={38}>
        <StatusButton aria-label="Workspace"><Gear s={13} c="#bbb" h="#4c4c4c" /></StatusButton>
        <StatusButton aria-label="Workspace list"><Caret /></StatusButton>
      </Group>
      <Group $w={24}><StatusButton aria-label="Monitor"><svg width="15" height="15" viewBox="0 0 15 15"><path d="M7.500 0v15M0 7.500h15" stroke="#ccc" strokeWidth="1.800" /></svg></StatusButton></Group>
      <Group $w={67}>
        <StatusButton><svg width="16" height="16" viewBox="0 0 16 16"><path d="M1 9l7 3 7-3v3l-7 4-7-4z" fill="#aaa" /><path d="M8 1l7 5-7 4-7-4z" fill="#86b572" stroke="#444" /></svg>&nbsp;3.500</StatusButton>
      </Group>
      <Group $w={22}><StatusButton aria-label="Isolate"><svg width="15" height="16" viewBox="0 0 15 16"><path d="M1 1h6v6H1zM7 9l3 6H4z" fill="none" stroke={g} strokeWidth="1.300" /><circle cx="11.500" cy="9" r="3" fill="none" stroke={g} strokeWidth="1.300" /></svg></StatusButton></Group>
      <Group $w={24}><StatusButton aria-label="Performance"><svg width="18" height="18" viewBox="0 0 18 18"><circle cx="9" cy="9" r="8" fill="#0b55a0" stroke="#1a78d8" strokeWidth="1.500" /><path d="M8 12l5-5" stroke="#5ab0ff" strokeWidth="1.300" /></svg></StatusButton></Group>
      <Group $w={26}><StatusButton aria-label="Clean screen"><svg width="16" height="13" viewBox="0 0 16 13"><path d="M.5.5h15v12H.5z" fill="none" stroke="#ddd" /><path d="M7 5L4 9M4 6v3h3" stroke="#eee" fill="none" strokeWidth="1.300" /></svg></StatusButton></Group>
    </Status>
  );
};

export default function App() {
  return (
    <App_>
      <GlobalStyle />
      <Toolbars />
      <AppButton aria-label="Application menu" />
      <Body>
        <Space />
        <Stage>
          <Canvas>
            <ViewLabel>[−][Top][2D Wireframe]</ViewLabel>
            <Drawing />
          </Canvas>
          <CommandLine>
            <CommandSide>
              <svg width="17" height="6" viewBox="0 0 17 6"><path d="M0 1h17M0 3.500h17M0 6h17" stroke="#aaa" strokeDasharray="1 1" /></svg>
              <svg width="9" height="9" viewBox="0 0 9 9"><path d="M1 1l7 7M8 1L1 8" stroke="#eee" strokeWidth="2" /></svg>
              <svg width="14" height="14" viewBox="0 0 14 14"><path d="M5 5l8 8" stroke="#eee" strokeWidth="3" /><path d="M5 1a3.500 3.500 0 1 1-4 4l3 1 2-2z" fill="#eee" /></svg>
            </CommandSide>
            <CommandMain>
              <History>Command: EditAlignmentLabels</History>
              <Prompt>
                <svg width="15" height="14" viewBox="0 0 15 14"><path d="M.5.5h14v13H.5z" fill="#dde0ea" stroke="#8890a8" /><path d="M3 4l3 3-3 3M8 11h4" fill="none" stroke="#223" strokeWidth="1.200" /></svg>
                <Caret s={6} c="#888" />
                <input aria-label="Command" placeholder="Type a command" />
              </Prompt>
            </CommandMain>
          </CommandLine>
        </Stage>
      </Body>
      <Footer>
        <LayoutTabs>
          <LayoutTab $w={31} $active>Model</LayoutTab>
          <LayoutTab $w={63}>Layout1</LayoutTab>
          <LayoutTab $w={63}>Layout2</LayoutTab>
          <NewTab $flip aria-label="New layout"><Plus /></NewTab>
        </LayoutTabs>
        <StatusBar />
      </Footer>
      <LabelsDialog />
      <PointsDialog />
      <Blend><Halo /></Blend>
      <Arrow><svg width="14" height="20" viewBox="0 0 14 20"><path d="M1 1v15l3.500-3 2.500 5.500 2.500-1L7 12h5z" fill="#fff" stroke="#222" /></svg></Arrow>
    </App_>
  );
}
